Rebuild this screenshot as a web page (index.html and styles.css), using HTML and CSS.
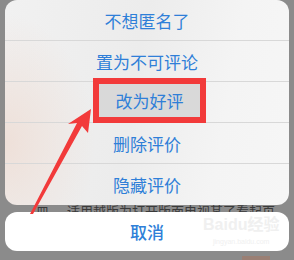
FILE: index.html
```html
<!DOCTYPE html>
<html lang="zh">
<head>
<meta charset="utf-8">
<link rel="stylesheet" href="styles.css">
</head>
<body>
<div class="page">
  <div class="sheet">
    <div class="row">不想匿名了</div>
    <div class="row">置为不可评论</div>
    <div class="row row-hl"><span class="hl">改为好评</span></div>
    <div class="row">删除评价</div>
    <div class="row last">隐藏评价</div>
  </div>
  <div class="behind"><span class="ico">皿</span><span class="behind-text">适用越版为打开版面电视某了看起页...</span></div>
  <div class="cancel">
    <span class="cancel-label">取消</span>
    <span class="wm"><span class="wm-main">Baidu经验</span><span class="wm-sub">jingyan.baidu.com</span></span>
  </div>
  <div class="corner-tag"></div>
  <svg class="arrow" width="294" height="260" viewBox="0 0 294 260">
    <polygon points="30,214 33,214 82,126 88,133 91,109 68,124 77,123" fill="#f23a3a"/>
  </svg>
</div>
</body>
</html>
```
FILE: styles.css
```css
html, body {
  margin: 0;
  padding: 0;
}
body {
  background: #8b8b8b;
  font-family: "Noto Sans CJK SC", "Noto Sans", sans-serif;
  width: 294px;
  height: 260px;
  overflow: hidden;
}
.page {
  position: relative;
  width: 294px;
  height: 260px;
  display: flex;
  flex-direction: column;
  align-items: stretch;
  padding: 0 5px;
  box-sizing: border-box;
}
.sheet {
  background:
    radial-gradient(ellipse 90px 130px at 0% 70%, rgba(238, 222, 214, 0.9), rgba(238, 222, 214, 0) 100%),
    linear-gradient(100deg, #f1f1f1 0%, #ececec 45%, #f4f4f4 75%, #f6f6f6 100%);
  border-radius: 12px;
  display: flex;
  flex-direction: column;
}
.row {
  position: relative;
  height: 40px;
  border-bottom: 1px solid #d8d8d8;
  display: flex;
  align-items: center;
  justify-content: center;
  color: #2f7fd8;
  font-size: 17px;
  line-height: 1;
}
.row.last {
  border-bottom: none;
  height: 41px;
}
.hl {
  position: absolute;
  left: 88px;
  top: -4px;
  width: 101px;
  height: 33px;
  border: 6px solid #f23a3a;
  background: #d9d9d9;
  display: flex;
  align-items: center;
  justify-content: center;
}
.behind {
  height: 7px;
  overflow: hidden;
  display: flex;
  align-items: flex-end;
  color: #3a3a3a;
  font-size: 13px;
  line-height: 12px;
  gap: 18px;
  padding-left: 31px;
}
.behind span {
  display: block;
  height: 12px;
  margin-bottom: -5px;
  white-space: nowrap;
}
.cancel {
  position: relative;
  height: 39px;
  background: #ffffff;
  border-radius: 12px;
  display: flex;
  align-items: center;
  justify-content: center;
}
.cancel-label {
  color: #2f7fd8;
  font-size: 17px;
  font-weight: 500;
}
.wm {
  position: absolute;
  left: 198px;
  top: 2px;
  display: flex;
  flex-direction: column;
  align-items: center;
  gap: 1px;
  color: #f0f0f0;
}
.wm-main {
  font-family: "Liberation Sans", "Noto Sans CJK SC", sans-serif;
  font-size: 16px;
  font-weight: bold;
  line-height: 22px;
  height: 22px;
}
.wm-sub {
  font-family: "Liberation Sans", sans-serif;
  font-size: 7px;
  line-height: 9px;
}
.corner-tag {
  position: absolute;
  left: 242px;
  top: 256px;
  width: 28px;
  height: 4px;
  background: #9a7f74;
}
.arrow {
  position: absolute;
  left: 0;
  top: 0;
  pointer-events: none;
}
```
